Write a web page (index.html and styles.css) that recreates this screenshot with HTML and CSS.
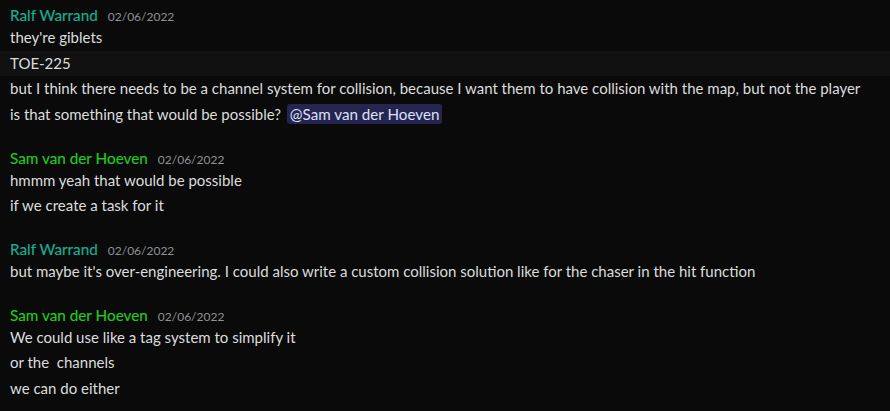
FILE: index.html
```html
<!DOCTYPE html>
<html>
<head>
<meta charset="utf-8">
<link rel="stylesheet" href="styles.css">
</head>
<body>
<div class="chat">
  <div class="group">
    <div class="header"><span class="name ralf">Ralf Warrand</span><span class="date">02/06/2022</span></div>
    <div class="msg">they're giblets</div>
    <div class="msg hl">TOE-225</div>
    <div class="msg">but I think there needs to be a channel system for collision, because I want them to have collision with the map, but not the player</div>
    <div class="msg">is that something that would be possible? <span class="mention">@Sam van der Hoeven</span></div>
  </div>
  <div class="group">
    <div class="header"><span class="name sam">Sam van der Hoeven</span><span class="date">02/06/2022</span></div>
    <div class="msg">hmmm yeah that would be possible</div>
    <div class="msg">if we create a task for it</div>
  </div>
  <div class="group">
    <div class="header"><span class="name ralf">Ralf Warrand</span><span class="date">02/06/2022</span></div>
    <div class="msg">but maybe it's over-engineering. I could also write a custom collision solution like for the chaser in the hit function</div>
  </div>
  <div class="group">
    <div class="header"><span class="name sam">Sam van der Hoeven</span><span class="date">02/06/2022</span></div>
    <div class="msg">We could use like a tag system to simplify it</div>
    <div class="msg">or the&nbsp; channels</div>
    <div class="msg">we can do either</div>
  </div>
</div>
</body>
</html>
```
FILE: styles.css
```css
html, body {
  margin: 0;
  padding: 0;
  background: #0a0a0a;
}
body {
  font-family: Lato, "Noto Sans", sans-serif;
  color: #dcddde;
  width: 890px;
  height: 411px;
  overflow: hidden;
}
.chat {
  padding-top: 5px;
  display: flex;
  flex-direction: column;
  gap: 20px;
}
.header {
  height: 20px;
  line-height: 20px;
  padding-left: 10px;
  display: flex;
  align-items: baseline;
  gap: 10px;
}
.name {
  font-size: 15.3px;
  -webkit-text-stroke: 0.15px currentColor;
}
.ralf { color: #19b092; }
.sam { color: #1fcc1f; }
.date {
  font-size: 12px;
  color: #8e9297;
}
.msg {
  font-size: 15px;
  line-height: 25.67px;
  padding-left: 10px;
  white-space: nowrap;
}
.msg.hl {
  background: #111111;
}
.mention {
  background: #25254f;
  color: #dee0fc;
  border-radius: 3px;
  padding: 1px 3px;
  margin-left: 2px;
  font-size: 15.2px;
}
```
